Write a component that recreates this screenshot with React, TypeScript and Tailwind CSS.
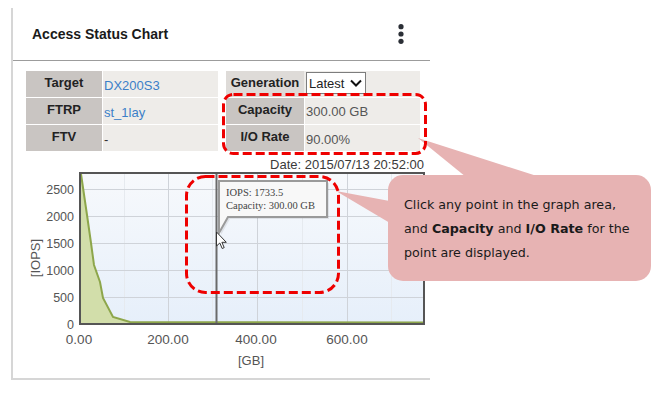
import React from "react";

const Label = ({ children, light }: { children: React.ReactNode; light?: boolean }) => (
  <div
    className={`w-[76px] flex items-center justify-center pb-[3px] font-bold text-[13px] text-[#222] ${
      light ? "bg-[#dedbd8]" : "bg-[#c9c5c2]"
    }`}
  >
    {children}
  </div>
);

export default function App() {
  return (
    <div className="relative w-[660px] h-[394px] bg-white overflow-hidden font-['Liberation_Sans',Arial,sans-serif]">
      <div className="pt-[8px] pl-[11px]">
        <div className="w-[419px] border-l-2 border-b-2 border-[#d6d6d6]">
          {/* Header */}
          <div className="h-[53px] border-b border-[#9c9c9c] flex items-center justify-between pl-[19px] pr-[26px]">
            <div className="text-[14px] font-bold text-[#1a1a1a]">Access Status Chart</div>
            <svg width="6" height="20" viewBox="0 0 6 20">
              <circle cx="3" cy="2.7" r="2.6" fill="#2b2f36" />
              <circle cx="3" cy="10" r="2.6" fill="#2b2f36" />
              <circle cx="3" cy="17.3" r="2.6" fill="#2b2f36" />
            </svg>
          </div>

          {/* Tables */}
          <div className="mt-[10px] pl-[13px] flex gap-[8px]">
            <div className="w-[192px] flex flex-col gap-[1px]">
              <div className="h-[26px] flex gap-[1px]">
                <Label>Target</Label>
                <div className="flex-1 bg-[#eeece9] flex items-center pl-[1px] pt-[4px] text-[13px] text-[#3b7fc8]">DX200S3</div>
              </div>
              <div className="h-[26px] flex gap-[1px]">
                <Label>FTRP</Label>
                <div className="flex-1 bg-[#eeece9] flex items-center pl-[1px] pt-[4px] text-[13px] text-[#3b7fc8]">st_1lay</div>
              </div>
              <div className="h-[26px] flex gap-[1px]">
                <Label>FTV</Label>
                <div className="flex-1 bg-[#eeece9] flex items-center pl-[1px] pt-[4px] text-[13px] text-[#333]">-</div>
              </div>
            </div>
            <div className="w-[194px] flex flex-col gap-[1px]">
              <div className="h-[26px] flex gap-[1px] bg-[#eeece9]">
                <div className="w-[78px] flex items-center justify-center pb-[3px] font-bold text-[13px] text-[#222] bg-[#dedbd8]">
                  Generation
                </div>
                <div className="flex-1 flex items-start pt-[1px] pl-[1px]">
                  <div className="w-[60px] h-[22px] bg-white border border-[#7d7d7d] flex items-center justify-between pl-[2px] pr-[3px]">
                    <span className="text-[13px] text-[#222] pt-[2px]">Latest</span>
                    <svg width="12" height="8" viewBox="0 0 12 8">
                      <polyline points="1,1.5 6,6.5 11,1.5" fill="none" stroke="#111" strokeWidth="2" />
                    </svg>
                  </div>
                </div>
              </div>
              <div className="h-[26px] flex gap-[1px]">
                <div className="w-[78px] flex items-center justify-center pb-[3px] font-bold text-[13px] text-[#222] bg-[#c9c5c2]">
                  Capacity
                </div>
                <div className="flex-1 bg-[#eeece9] flex items-center pl-[1px] pt-[2px] text-[13px] text-[#555]">300.00 GB</div>
              </div>
              <div className="h-[26px] flex gap-[1px]">
                <div className="w-[78px] flex items-center justify-center pb-[3px] font-bold text-[13px] text-[#222] bg-[#c9c5c2]">
                  I/O Rate
                </div>
                <div className="flex-1 bg-[#eeece9] flex items-center pl-[1px] pt-[4px] text-[13px] text-[#555]">90.00%</div>
              </div>
            </div>
          </div>

          {/* Date */}
          <div className="h-[21px] flex items-end justify-end pr-[6px]">
            <span className="text-[13px] leading-[14px] text-[#3a3a3a]">Date: 2015/07/13 20:52:00</span>
          </div>

          {/* Chart */}
          <svg width="417" height="206" viewBox="13 172 417 206" className="block">
            <defs>
              <linearGradient id="plotbg" x1="0" y1="0" x2="0" y2="1">
                <stop offset="0" stopColor="#f7f9fc" />
                <stop offset="1" stopColor="#e6effa" />
              </linearGradient>
            </defs>
            <rect x="80" y="173" width="344" height="151" fill="url(#plotbg)" />
            {[124.5, 212.5, 302.5, 391.5].map((x) => (
              <line key={x} x1={x} y1="174" x2={x} y2="323" stroke="#e6eaef" strokeWidth="1" />
            ))}
            {[189.5, 216.5, 243.5, 270.5, 297.5].map((y) => (
              <line key={y} x1="80" y1={y} x2="424" y2={y} stroke="#cfd3d9" strokeWidth="1" />
            ))}
            {[168.5, 257.5, 347.5].map((x) => (
              <line key={x} x1={x} y1="174" x2={x} y2="323" stroke="#cfd3d9" strokeWidth="1" />
            ))}
            <path
              d="M81,174 L87,215 L91,243 L94,265 L100,282 L103,298 L113,317 L130,322 L423,322.5 L423,323 L81,323 Z"
              fill="#d2deaa"
            />
            <path
              d="M81,174 L87,215 L91,243 L94,265 L100,282 L103,298 L113,317 L130,322 L423,322.5"
              fill="none"
              stroke="#8da64b"
              strokeWidth="2"
            />
            <rect x="80" y="173" width="344" height="151" fill="none" stroke="#555" strokeWidth="2" />
            <line x1="216.5" y1="174" x2="216.5" y2="323" stroke="#6a6a6a" strokeWidth="2" />

            {/* tooltip */}
            <path d="M221,183 H329 V219 H230 L221,235 Z" fill="#000" opacity="0.08" />
            <path d="M219,181 H327 V217 H228 L219,233 Z" fill="#f8f8f8" stroke="#9a9a9a" strokeWidth="2" />
            <text x="226" y="196" fontFamily="'Liberation Serif', serif" fontSize="10.5" fill="#444">
              IOPS: 1733.5
            </text>
            <text x="226" y="209" fontFamily="'Liberation Serif', serif" fontSize="10.5" fill="#444">
              Capacity: 300.00 GB
            </text>

            {/* mouse cursor */}
            <path
              d="M216.5,232 L216.5,246 L219.8,243 L222.2,248.5 L224.2,247.6 L221.9,242.3 L226.3,242.3 Z"
              fill="#fff"
              stroke="#333"
              strokeWidth="1"
              strokeLinejoin="round"
            />

            {/* axis labels */}
            {[
              ["2500", 189],
              ["2000", 216],
              ["1500", 243],
              ["1000", 270],
              ["500", 297],
              ["0", 324],
            ].map(([t, y]) => (
              <text
                key={t as string}
                x="74"
                y={(y as number) + 4.5}
                textAnchor="end"
                fontFamily="'Liberation Sans', Arial, sans-serif"
                fontSize="12.5"
                fill="#555"
              >
                {t}
              </text>
            ))}
            {[
              ["0.00", 79],
              ["200.00", 168],
              ["400.00", 256],
              ["600.00", 347],
            ].map(([t, x]) => (
              <text
                key={t as string}
                x={x as number}
                y="344"
                textAnchor="middle"
                fontFamily="'Liberation Sans', Arial, sans-serif"
                fontSize="13.5"
                fill="#555"
              >
                {t}
              </text>
            ))}
            <text
              x="0"
              y="0"
              transform="translate(39.5,258) rotate(-90)"
              textAnchor="middle"
              fontFamily="'Liberation Sans', Arial, sans-serif"
              fontSize="13"
              fill="#555"
            >
              [IOPS]
            </text>
            <text
              x="251"
              y="365"
              textAnchor="middle"
              fontFamily="'Liberation Sans', Arial, sans-serif"
              fontSize="13"
              fill="#555"
            >
              [GB]
            </text>
          </svg>
        </div>
      </div>

      {/* annotation overlay */}
      <svg className="absolute left-0 top-0 pointer-events-none" width="660" height="394" viewBox="0 0 660 394">
        <path d="M418,138 L466,177 L540,177 Z" fill="#e7b3b3" />
        <path d="M336,191 L395,202 L395,226 Z" fill="#e7b3b3" />
        <rect x="388" y="175" width="263" height="106" rx="15" fill="#e7b3b3" />
        <rect
          x="186.5"
          y="176.5"
          width="152"
          height="116"
          rx="19"
          fill="none"
          stroke="#ee0000"
          strokeWidth="3"
          strokeDasharray="9 4"
        />
        <rect
          x="223.5"
          y="94.5"
          width="202"
          height="59"
          rx="10"
          fill="none"
          stroke="#ee0000"
          strokeWidth="3"
          strokeDasharray="9 4"
        />
      </svg>
      <div className="absolute left-[404px] top-[193px] leading-[24px] text-[12.7px] text-[#1a1a1a] whitespace-nowrap font-['DejaVu_Sans',Verdana,sans-serif]">
        Click any point in the graph area,
        <br />
        and <b>Capacity</b> and <b>I/O Rate</b> for the
        <br />
        point are displayed.
      </div>
    </div>
  );
}
